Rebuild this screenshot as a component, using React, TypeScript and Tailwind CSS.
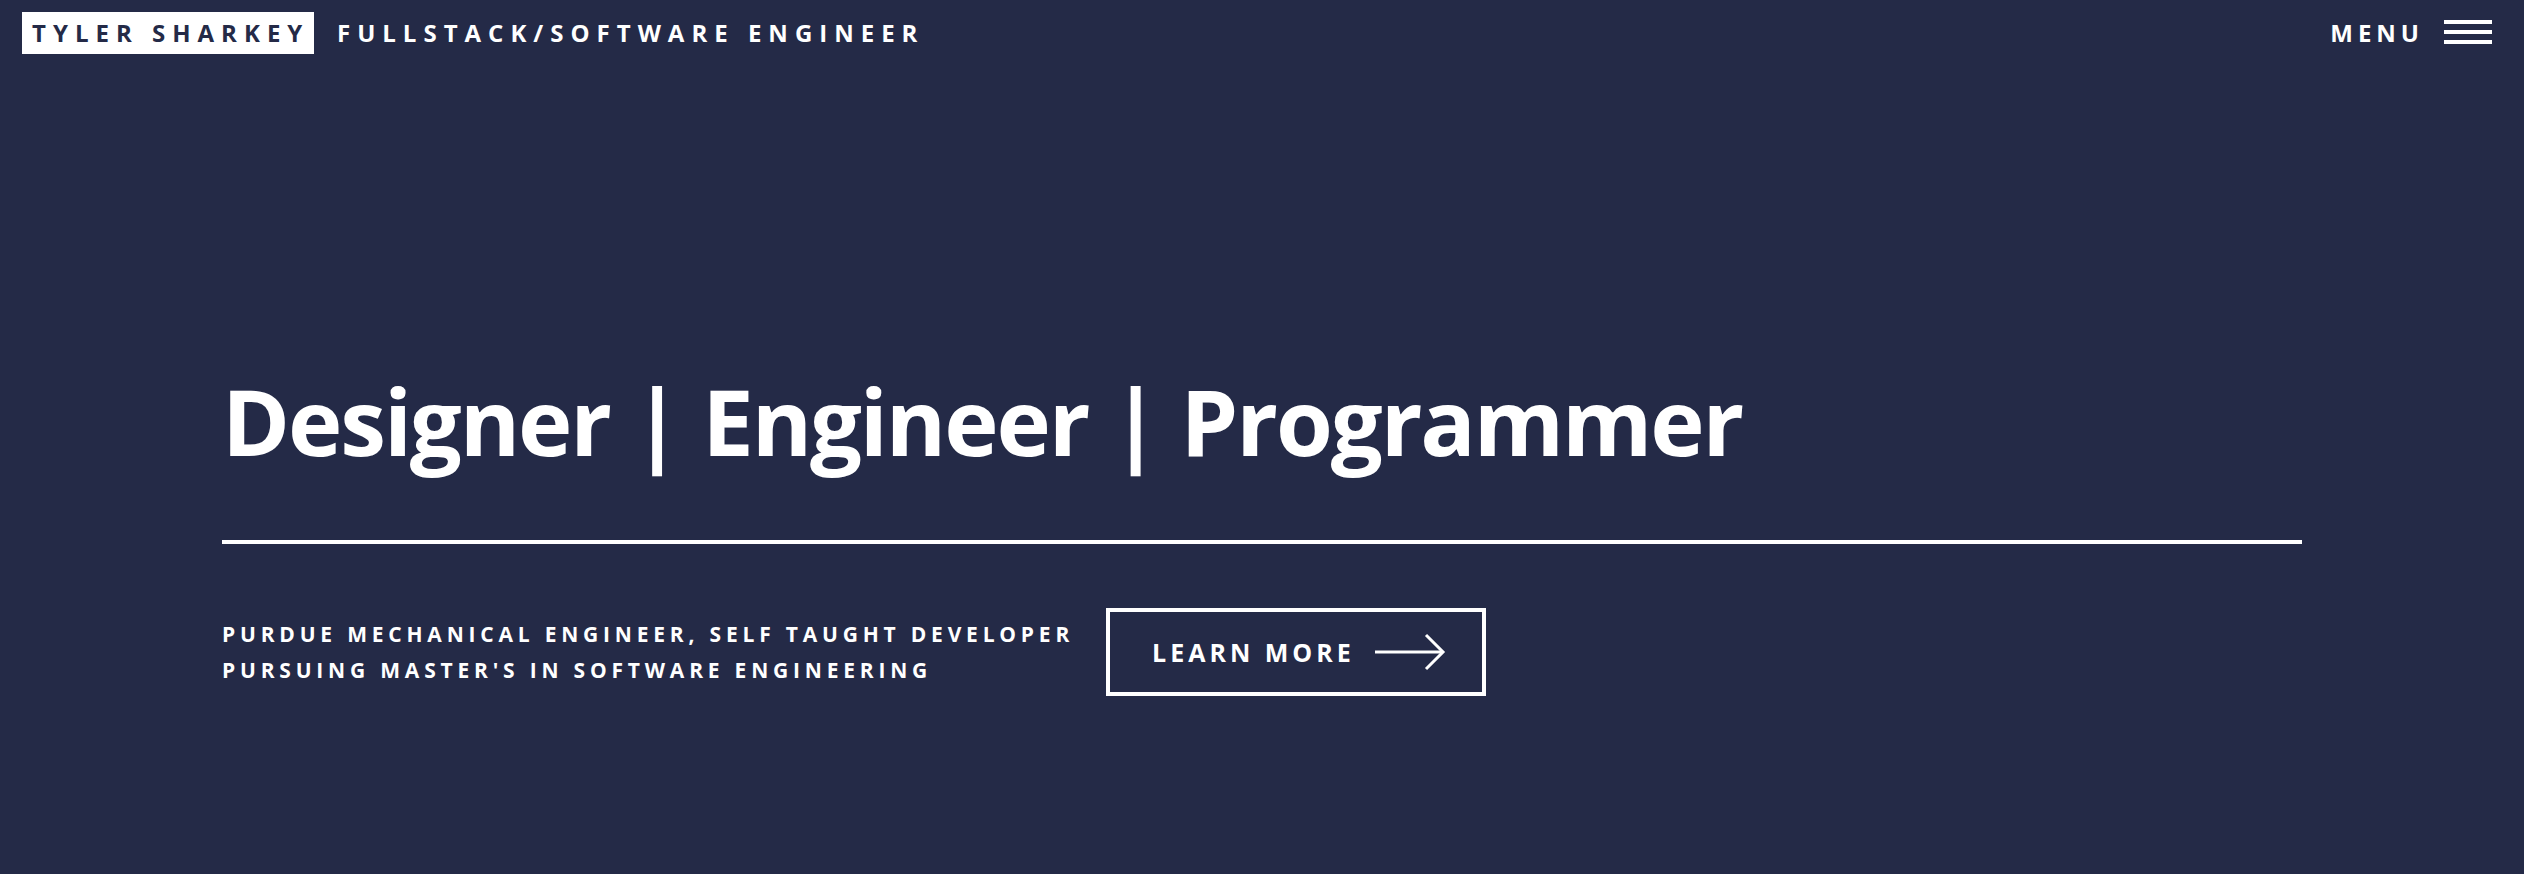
import React from "react";

const font = { fontFamily: '"Open Sans", "Noto Sans", sans-serif' };

function Hamburger() {
  return (
    <div className="flex flex-col gap-[6px] w-[48px]">
      <div className="h-[4px] w-full bg-white" />
      <div className="h-[4px] w-full bg-white" />
      <div className="h-[4px] w-full bg-white" />
    </div>
  );
}

function Arrow() {
  return (
    <svg width="72" height="38" viewBox="0 0 72 38" fill="none" className="block">
      <line x1="0" y1="19" x2="68" y2="19" stroke="white" strokeWidth="3" />
      <polyline points="51,2 68,19 51,36" stroke="white" strokeWidth="3" fill="none" />
    </svg>
  );
}

export default function App() {
  return (
    <div
      className="w-[2524px] h-[874px] bg-[#242a47] text-white overflow-hidden flex flex-col"
      style={font}
    >
      <header className="flex items-start justify-between pt-[12px] pl-[22px] pr-[32px]">
        <div className="flex items-center">
          <div className="bg-white text-[#242a47] h-[42px] w-[292px] pl-[10px] text-[24px] leading-[42px] font-bold tracking-[7px] whitespace-nowrap">
            TYLER SHARKEY
          </div>
          <div className="ml-[23px] text-[24px] leading-[42px] font-bold tracking-[7px] whitespace-nowrap">
            FULLSTACK/SOFTWARE ENGINEER
          </div>
        </div>
        <div className="flex items-center h-[42px]">
          <div className="text-[24px] font-bold tracking-[5px] leading-none">MENU</div>
          <div className="ml-[20px] -mt-[2px]">
            <Hamburger />
          </div>
        </div>
      </header>

      <main className="w-[2080px] mx-auto pt-[321px]">
        <h1 className="text-[92px] leading-none font-bold tracking-[-2.1px] whitespace-nowrap">
          Designer | Engineer | Programmer
        </h1>
        <div className="mt-[73px] h-[4px] bg-white w-full" />
        <div className="mt-[64px] flex items-center">
          <div className="text-[21px] leading-[36px] font-bold tracking-[4.8px] whitespace-nowrap">
            <div>PURDUE MECHANICAL ENGINEER, SELF TAUGHT DEVELOPER</div>
            <div>PURSUING MASTER'S IN SOFTWARE ENGINEERING</div>
          </div>
          <button className="ml-[32px] h-[88px] w-[380px] border-[4px] border-white flex items-center pl-[42px] text-[25px] font-bold tracking-[4px] leading-none whitespace-nowrap">
            <span>LEARN MORE</span>
            <span className="ml-[20px]">
              <Arrow />
            </span>
          </button>
        </div>
      </main>
    </div>
  );
}
